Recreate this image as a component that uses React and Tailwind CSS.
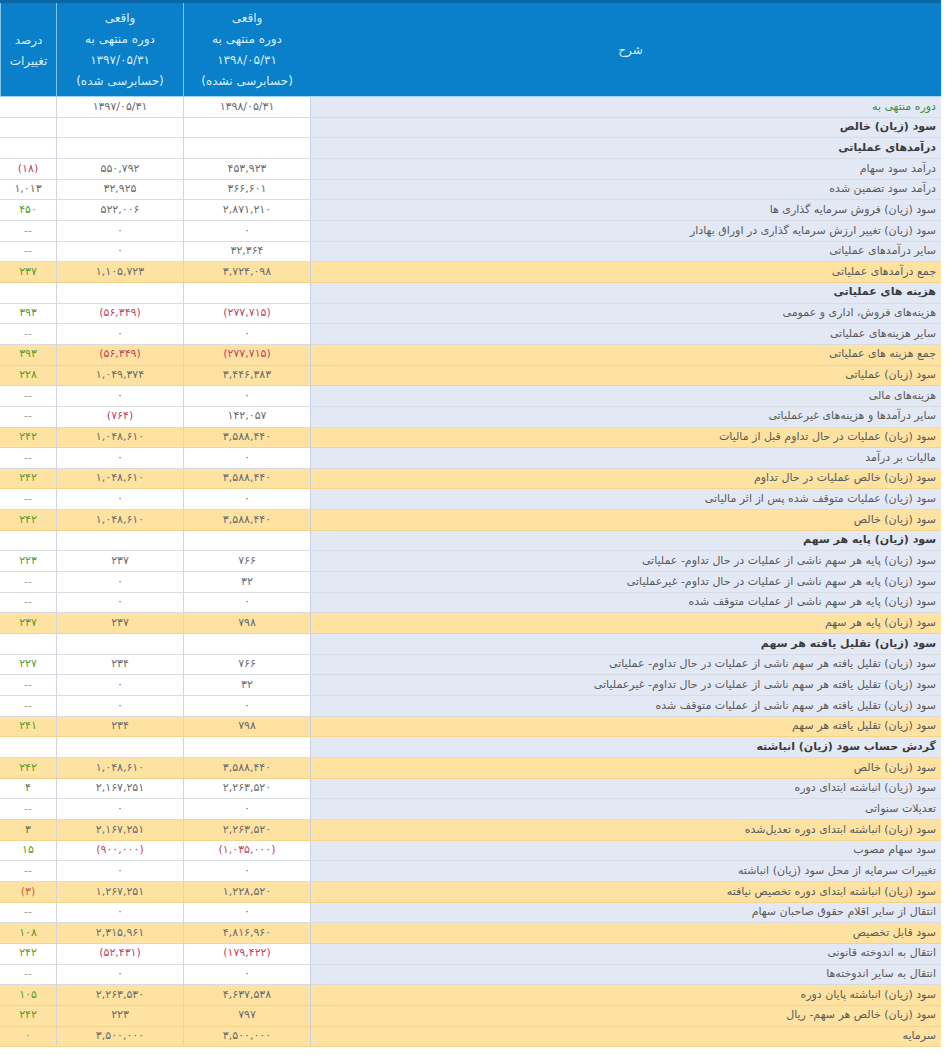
import React from "react";

/* ---------------------------------------------------
   ROWS — [desc, 1398, 1397, percent, kind]
   kind: "b" bold section, "h" highlighted total, "d" date row
--------------------------------------------------- */
const rows = [
  ["دوره منتهی به", "۱۳۹۸/۰۵/۳۱", "۱۳۹۷/۰۵/۳۱", "", "d"],
  ["سود (زیان) خالص", "", "", "", "b"],
  ["درآمدهای عملیاتی", "", "", "", "b"],
  ["درآمد سود سهام", "۴۵۳,۹۲۳", "۵۵۰,۷۹۲", "(۱۸)"],
  ["درآمد سود تضمین شده", "۳۶۶,۶۰۱", "۳۲,۹۲۵", "۱,۰۱۳"],
  ["سود (زیان) فروش سرمایه گذاری ها", "۲,۸۷۱,۲۱۰", "۵۲۲,۰۰۶", "۴۵۰"],
  ["سود (زیان) تغییر ارزش سرمایه گذاری در اوراق بهادار", "۰", "۰", "--"],
  ["سایر درآمدهای عملیاتی", "۳۲,۳۶۴", "۰", "--"],
  ["جمع درآمدهای عملیاتی", "۳,۷۲۴,۰۹۸", "۱,۱۰۵,۷۲۳", "۲۳۷", "h"],
  ["هزینه های عملیاتی", "", "", "", "b"],
  ["هزینه‌های فروش، اداری و عمومی", "(۲۷۷,۷۱۵)", "(۵۶,۳۴۹)", "۳۹۳"],
  ["سایر هزینه‌های عملیاتی", "۰", "۰", "--"],
  ["جمع هزینه های عملیاتی", "(۲۷۷,۷۱۵)", "(۵۶,۳۴۹)", "۳۹۳", "h"],
  ["سود (زیان) عملیاتی", "۳,۴۴۶,۳۸۳", "۱,۰۴۹,۳۷۴", "۲۲۸", "h"],
  ["هزینه‌های مالی", "۰", "۰", "--"],
  ["سایر درآمدها و هزینه‌های غیرعملیاتی", "۱۴۲,۰۵۷", "(۷۶۴)", "--"],
  ["سود (زیان) عملیات در حال تداوم قبل از مالیات", "۳,۵۸۸,۴۴۰", "۱,۰۴۸,۶۱۰", "۲۴۲", "h"],
  ["مالیات بر درآمد", "۰", "۰", "--"],
  ["سود (زیان) خالص عملیات در حال تداوم", "۳,۵۸۸,۴۴۰", "۱,۰۴۸,۶۱۰", "۲۴۲", "h"],
  ["سود (زیان) عملیات متوقف شده پس از اثر مالیاتی", "۰", "۰", "--"],
  ["سود (زیان) خالص", "۳,۵۸۸,۴۴۰", "۱,۰۴۸,۶۱۰", "۲۴۲", "h"],
  ["سود (زیان) پایه هر سهم", "", "", "", "b"],
  ["سود (زیان) پایه هر سهم ناشی از عملیات در حال تداوم- عملیاتی", "۷۶۶", "۲۳۷", "۲۲۳"],
  ["سود (زیان) پایه هر سهم ناشی از عملیات در حال تداوم- غیرعملیاتی", "۳۲", "۰", "--"],
  ["سود (زیان) پایه هر سهم ناشی از عملیات متوقف شده", "۰", "۰", "--"],
  ["سود (زیان) پایه هر سهم", "۷۹۸", "۲۳۷", "۲۳۷", "h"],
  ["سود (زیان) تقلیل یافته هر سهم", "", "", "", "b"],
  ["سود (زیان) تقلیل یافته هر سهم ناشی از عملیات در حال تداوم- عملیاتی", "۷۶۶", "۲۳۴", "۲۲۷"],
  ["سود (زیان) تقلیل یافته هر سهم ناشی از عملیات در حال تداوم- غیرعملیاتی", "۳۲", "۰", "--"],
  ["سود (زیان) تقلیل یافته هر سهم ناشی از عملیات متوقف شده", "۰", "۰", "--"],
  ["سود (زیان) تقلیل یافته هر سهم", "۷۹۸", "۲۳۴", "۲۴۱", "h"],
  ["گردش حساب سود (زیان) انباشته", "", "", "", "b"],
  ["سود (زیان) خالص", "۳,۵۸۸,۴۴۰", "۱,۰۴۸,۶۱۰", "۲۴۲", "h"],
  ["سود (زیان) انباشته ابتدای دوره", "۲,۲۶۳,۵۲۰", "۲,۱۶۷,۲۵۱", "۴"],
  ["تعدیلات سنواتی", "۰", "۰", "--"],
  ["سود (زیان) انباشته ابتدای دوره تعدیل‌شده", "۲,۲۶۳,۵۲۰", "۲,۱۶۷,۲۵۱", "۳", "h"],
  ["سود سهام مصوب", "(۱,۰۳۵,۰۰۰)", "(۹۰۰,۰۰۰)", "۱۵"],
  ["تغییرات سرمایه از محل سود (زیان) انباشته", "۰", "۰", "--"],
  ["سود (زیان) انباشته ابتدای دوره تخصیص نیافته", "۱,۲۲۸,۵۲۰", "۱,۲۶۷,۲۵۱", "(۳)", "h"],
  ["انتقال از سایر اقلام حقوق صاحبان سهام", "۰", "۰", "--"],
  ["سود قابل تخصیص", "۴,۸۱۶,۹۶۰", "۲,۳۱۵,۹۶۱", "۱۰۸", "h"],
  ["انتقال به اندوخته قانونی", "(۱۷۹,۴۲۲)", "(۵۲,۴۳۱)", "۲۴۲"],
  ["انتقال به سایر اندوخته‌ها", "۰", "۰", "--"],
  ["سود (زیان) انباشته پایان دوره", "۴,۶۳۷,۵۳۸", "۲,۲۶۳,۵۳۰", "۱۰۵", "h"],
  ["سود (زیان) خالص هر سهم- ریال", "۷۹۷", "۲۲۳", "۲۴۲", "h"],
  ["سرمایه", "۳,۵۰۰,۰۰۰", "۳,۵۰۰,۰۰۰", "۰", "h"],
];

const numColor = (v) =>
  v.startsWith("(") ? "text-[#c2455c]" : "text-[#6b6b6b]";

const pctColor = (v) => {
  if (v === "(۳)") return "text-[#d0602c]";
  if (v.startsWith("(")) return "text-[#c2455c]";
  if (v === "--" || v === "۰") return "text-[#9a9a9a]";
  if (v === "۱,۰۱۳" || v === "۴" || v === "۳") return "text-[#6f6a55]";
  return "text-[#5e9a2a]";
};

const HeadCol = ({ date, note }) => (
  <div className="flex flex-col items-center justify-center border-l border-[#7fc2ea] text-[12px] leading-[21px] text-[#d9eefb]">
    <span>واقعی</span>
    <span>دوره منتهی به</span>
    <span>{date}</span>
    <span>{note}</span>
  </div>
);

export default function App() {
  return (
    <div className="min-h-screen bg-white">
      <div
        dir="rtl"
        className="w-[941px] font-['DejaVu_Sans',sans-serif] text-[11px]"
      >
        {/* HEADER */}
        <div className="grid grid-cols-[631px_127px_127px_56px] h-[97px] bg-[#0a80cb] border-t-[3px] border-[#0a67a6] border-b border-b-[#9ed6f2]">
          <div className="flex items-center justify-center text-[12px] text-[#d9eefb] pl-[10px]">
            شرح
          </div>
          <HeadCol date="۱۳۹۸/۰۵/۳۱" note="(حسابرسی نشده)" />
          <HeadCol date="۱۳۹۷/۰۵/۳۱" note="(حسابرسی شده)" />
          <div className="flex flex-col items-center justify-center border-l border-[#7fc2ea] text-[12px] leading-[21px] text-[#d9eefb] pt-[3px]">
            <span>درصد</span>
            <span>تغییرات</span>
          </div>
        </div>

        {/* BODY */}
        {rows.map(([desc, a, b, pct, kind], i) => {
          const hl = kind === "h";
          return (
            <div
              key={i}
              className={`grid grid-cols-[631px_127px_127px_56px] h-[20.67px] border-b ${
                hl ? "bg-[#fde2a2] border-[#f3d48a]" : "bg-white border-[#d9dce2]"
              }`}
            >
              <div
                className={`flex items-center pr-[5px] border-l border-[#c9d1e0] ${
                  hl ? "" : "bg-[#e3e8f5]"
                } ${
                  kind === "b"
                    ? "font-bold text-[#3b3b3b]"
                    : kind === "d"
                    ? "text-[#3f8e3a]"
                    : "text-[#5a5a5a]"
                }`}
              >
                {desc}
              </div>
              <div
                className={`flex items-center justify-center border-l border-[#d2d5da] ${numColor(a)}`}
              >
                {a}
              </div>
              <div
                className={`flex items-center justify-center border-l border-[#d2d5da] ${numColor(b)}`}
              >
                {b}
              </div>
              <div className={`flex items-center justify-center ${pctColor(pct)}`}>
                {pct}
              </div>
            </div>
          );
        })}
      </div>
    </div>
  );
}
